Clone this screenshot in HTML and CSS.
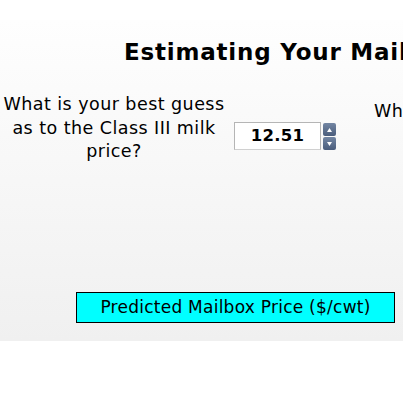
FILE: index.html
```html
<!DOCTYPE html>
<html>
<head>
<meta charset="utf-8">
<link rel="stylesheet" href="styles.css">
</head>
<body>
<div class="panel">
  <h1 class="title">Estimating Your Mailbox Price</h1>
  <div class="row">
    <div class="question">What is your best guess as to the Class III milk price?</div>
    <div class="field">
      <div class="input">12.51</div>
      <div class="spin">
        <div class="spin-btn"><svg width="5" height="4" viewBox="0 0 5 4"><path d="M2.5 0L5 4H0Z" fill="#fff"/></svg></div>
        <div class="spin-btn"><svg width="5" height="4" viewBox="0 0 5 4"><path d="M0 0H5L2.5 4Z" fill="#fff"/></svg></div>
      </div>
    </div>
    <div class="question q2">What is your expected component value?</div>
  </div>
  <div class="result">Predicted Mailbox Price ($/cwt)</div>
</div>
</body>
</html>
```
FILE: styles.css
```css
html, body {
  margin: 0;
  padding: 0;
  background: #fff;
  overflow: hidden;
}
body {
  font-family: "DejaVu Sans", Verdana, sans-serif;
  color: #000;
  width: 403px;
}
.panel {
  margin-top: 20px;
  height: 321px;
  width: 403px;
  background: linear-gradient(#fefefe, #f0f0f0);
  overflow: hidden;
  display: flex;
  flex-direction: column;
}
.title {
  margin: 18px 0 0 124px;
  font-size: 23px;
  font-weight: bold;
  letter-spacing: 0.8px;
  line-height: 28px;
  white-space: nowrap;
}
.row {
  display: flex;
  align-items: flex-start;
  margin-top: 27px;
  height: 160px;
  width: 800px;
  flex: none;
}
.question {
  width: 228px;
  flex: none;
  text-align: center;
  font-size: 17.5px;
  letter-spacing: 0.45px;
  line-height: 23.5px;
}
.q2 {
  margin-left: 14px;
  margin-top: 7px;
  width: 400px;
  text-align: left;
  padding-left: 24px;
  white-space: nowrap;
}
.field {
  display: flex;
  align-items: flex-start;
  margin-top: 29px;
  margin-left: 6px;
  gap: 2px;
}
.input {
  box-sizing: border-box;
  width: 87px;
  height: 28px;
  border: 1px solid #b5b5b5;
  border-bottom-color: #d0d0d0;
  background: #fff;
  font-size: 16.5px;
  font-weight: bold;
  letter-spacing: 0.3px;
  text-align: center;
  line-height: 26px;
}
.spin {
  display: flex;
  flex-direction: column;
  gap: 1px;
  width: 13px;
  margin-top: 1px;
}
.spin-btn {
  height: 13px;
  background: linear-gradient(#7386a3, #4a5d7c);
  border-radius: 2px;
  display: flex;
  align-items: center;
  justify-content: center;
}
.result {
  box-sizing: border-box;
  margin: 39px 0 0 76px;
  width: 319px;
  height: 31px;
  border: 1px solid #000;
  background: #00ffff;
  font-size: 17px;
  letter-spacing: 0.25px;
  line-height: 29px;
  text-align: center;
  white-space: nowrap;
  flex: none;
}
```
